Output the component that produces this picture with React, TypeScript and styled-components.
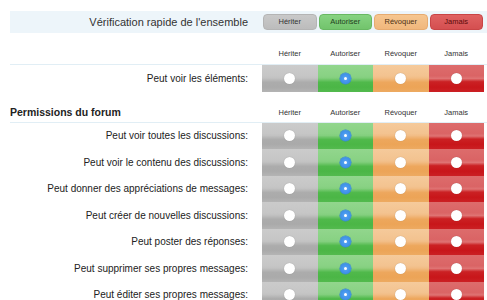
import React from 'react'
import styled, { createGlobalStyle } from 'styled-components'

type Tone = 'inherit' | 'allow' | 'revoke' | 'never'

const TONES: Tone[] = ['inherit', 'allow', 'revoke', 'never']

const LABELS: Record<Tone, string> = {
  inherit: 'Hériter',
  allow: 'Autoriser',
  revoke: 'Révoquer',
  never: 'Jamais',
}

const BUTTON_COLORS: Record<Tone, { bg: string; border: string; text: string }> = {
  inherit: { bg: 'linear-gradient(#c9c9c9, #bcbcbc)', border: '#b4b4b4', text: '#333' },
  allow: { bg: 'linear-gradient(#86d381, #72c46c)', border: '#68b862', text: '#1f3f1d' },
  revoke: { bg: 'linear-gradient(#f6c690, #f0b77c)', border: '#e6ab70', text: '#4d3214' },
  never: { bg: 'linear-gradient(#e06262, #d44f50)', border: '#c94546', text: '#5c0a0a' },
}

const CELL_COLORS: Record<Tone, string> = {
  inherit:
    'linear-gradient(#cbcbcb 0%, #c6c6c6 40%, #c2c2c2 48%, #acacac 64%, #aaaaaa 82%, #b4b4b4 100%)',
  allow:
    'linear-gradient(#92d68d 0%, #89d284 40%, #83cf7e 48%, #50b94b 64%, #4bb646 82%, #53ba4e 100%)',
  revoke:
    'linear-gradient(#f5ca9b 0%, #f3c390 40%, #f2bd86 48%, #eda75d 64%, #eca457 82%, #edaa61 100%)',
  never:
    'linear-gradient(#dd6c6c 0%, #da6465 40%, #df7373 50%, #cb2124 62%, #c8161a 82%, #cb2024 100%)',
}

const rows = [
  'Peut voir toutes les discussions:',
  'Peut voir le contenu des discussions:',
  'Peut donner des appréciations de messages:',
  'Peut créer de nouvelles discussions:',
  'Peut poster des réponses:',
  'Peut supprimer ses propres messages:',
  'Peut éditer ses propres messages:',
]

const GlobalStyle = createGlobalStyle`
  body {
    margin: 0;
    background: #fff;
    font-family: "Liberation Sans", Arial, sans-serif;
    color: #2b2b2b;
  }
`

const Page = styled.div`
  width: 477px;
  padding: 11px 0 0 10px;
`

const columns = `
  display: grid;
  grid-template-columns: 252px repeat(4, 55.5px) 1fr;
`

const QuickBar = styled.div`
  ${columns}
  height: 22px;
  align-items: center;
  background: #edf5fa;
`

const BarTitle = styled.div`
  text-align: right;
  padding-right: 14px;
  font-size: 11px;
  color: #333;
`

const QuickButton = styled.button<{ $tone: Tone }>`
  height: 16px;
  margin: 0 1px;
  padding: 0;
  border-radius: 4px;
  border: 1px solid ${({ $tone }) => BUTTON_COLORS[$tone].border};
  background: ${({ $tone }) => BUTTON_COLORS[$tone].bg};
  color: ${({ $tone }) => BUTTON_COLORS[$tone].text};
  font-family: inherit;
  font-size: 7.5px;
  line-height: 14px;
`

const HeadRow = styled.div`
  ${columns}
  height: 31px;
  align-items: end;
  border-bottom: 1px solid #e1eef5;
`

const ColLabel = styled.div`
  text-align: center;
  font-size: 7.5px;
  color: #333;
  padding-bottom: 6px;
`

const SectionTitle = styled.div`
  font-size: 10.5px;
  font-weight: bold;
  color: #222;
  padding-bottom: 4px;
`

const SectionHead = styled(HeadRow)`
  height: 30px;
  & > ${ColLabel} {
    padding-bottom: 5px;
  }
`

const PermRow = styled.div`
  ${columns}
  height: 26.5px;
  align-items: stretch;
`

const PermLabel = styled.div`
  display: flex;
  align-items: center;
  justify-content: flex-end;
  padding-right: 14px;
  font-size: 10px;
  color: #222;
`

const Cell = styled.div<{ $tone: Tone }>`
  display: flex;
  align-items: center;
  justify-content: center;
  background: ${({ $tone }) => CELL_COLORS[$tone]};
`

const Radio = styled.span<{ $on: boolean }>`
  position: relative;
  width: 11px;
  height: 11px;
  border-radius: 50%;
  background: ${({ $on }) => ($on ? 'radial-gradient(circle, #5aa6f2 0%, #3b8de8 70%)' : '#fff')};
  box-shadow: ${({ $on }) => ($on ? '0 0 0 0.5px #2f7fd6' : '0 0 1px rgba(0,0,0,0.25)')};

  &::after {
    content: '';
    display: ${({ $on }) => ($on ? 'block' : 'none')};
    position: absolute;
    left: 4px;
    top: 4px;
    width: 3px;
    height: 3px;
    border-radius: 50%;
    background: #fff;
  }
`

function PermissionRow({ label, value }: { label: string; value: Tone }) {
  return (
    <PermRow>
      <PermLabel>{label}</PermLabel>
      {TONES.map(t => (
        <Cell key={t} $tone={t}>
          <Radio $on={t === value} />
        </Cell>
      ))}
    </PermRow>
  )
}

export default function App() {
  return (
    <Page>
      <GlobalStyle />
      <QuickBar>
        <BarTitle>Vérification rapide de l'ensemble</BarTitle>
        {TONES.map(t => (
          <QuickButton key={t} $tone={t}>{LABELS[t]}</QuickButton>
        ))}
      </QuickBar>

      <HeadRow>
        <div />
        {TONES.map(t => (
          <ColLabel key={t}>{LABELS[t]}</ColLabel>
        ))}
      </HeadRow>
      <PermissionRow label="Peut voir les éléments:" value="allow" />

      <SectionHead>
        <SectionTitle>Permissions du forum</SectionTitle>
        {TONES.map(t => (
          <ColLabel key={t}>{LABELS[t]}</ColLabel>
        ))}
      </SectionHead>
      {rows.map(r => (
        <PermissionRow key={r} label={r} value="allow" />
      ))}
    </Page>
  )
}
